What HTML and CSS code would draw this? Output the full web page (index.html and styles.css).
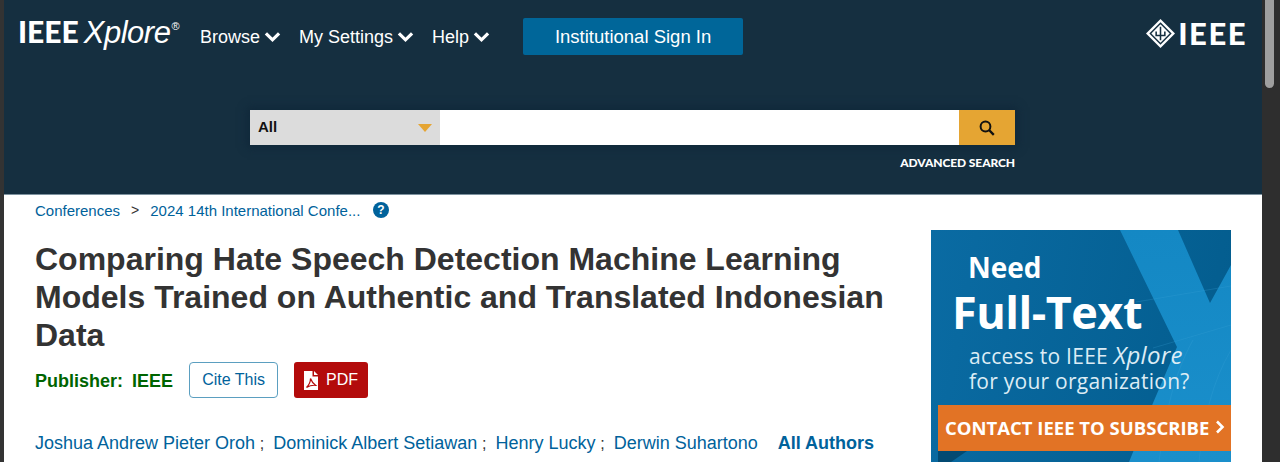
FILE: index.html
```html
<!DOCTYPE html>
<html lang="en">
<head>
    <meta charset="UTF-8">
    <title>Comparing Hate Speech Detection Machine Learning Models</title>
    <link rel="stylesheet" href="styles.css">
</head>
<body>
    <div class="window">
        <div class="page">
            <header class="site-header">
                <div class="top-row">
                    <a class="logo"><span class="logo-ieee">IEEE</span><span class="logo-xplore">Xplore</span><sup class="logo-reg">®</sup></a>
                    <nav class="main-nav">
                        <a class="nav-item">Browse <svg class="chevron" viewBox="0 0 16 11"><path d="M1.800 2 8 8.200 14.200 2" fill="none" stroke="#fff" stroke-width="3"/></svg></a>
                        <a class="nav-item">My Settings <svg class="chevron" viewBox="0 0 16 11"><path d="M1.800 2 8 8.200 14.200 2" fill="none" stroke="#fff" stroke-width="3"/></svg></a>
                        <a class="nav-item">Help <svg class="chevron" viewBox="0 0 16 11"><path d="M1.800 2 8 8.200 14.200 2" fill="none" stroke="#fff" stroke-width="3"/></svg></a>
                    </nav>
                    <a class="signin-btn">Institutional Sign In</a>
                    <a class="ieee-logo">
                        <svg class="ieee-mark" viewBox="0 0 30 30">
                            <path d="M15 0 30 15 15 30 0 15Z" fill="#fff"/>
                            <path d="M15 4.500 25.500 15 15 25.500 4.500 15Z" fill="none" stroke="#152f40" stroke-width="1.500"/>
                            <path d="M15 8v14M10.500 13v4h9v-4" stroke="#152f40" stroke-width="1.600" fill="none"/>
                        </svg>
                        <span class="ieee-word">IEEE</span>
                    </a>
                </div>
                <div class="search-wrap">
                    <div class="search-bar">
                        <div class="search-select"><span class="select-label">All</span><span class="select-arrow"></span></div>
                        <div class="search-input"></div>
                        <button class="search-btn">
                            <svg viewBox="0 0 16 16" width="16" height="16"><circle cx="6.500" cy="6.500" r="4.900" fill="none" stroke="#111" stroke-width="2"/><path d="M10 10l4.800 4.800" stroke="#111" stroke-width="2.400"/></svg>
                        </button>
                    </div>
                    <a class="advanced-link">ADVANCED SEARCH</a>
                </div>
            </header>

            <main class="content">
                <div class="article">
                    <div class="breadcrumbs">
                        <a>Conferences</a>
                        <span class="crumb-sep">&gt;</span>
                        <a>2024 14th International Confe...</a>
                        <svg class="help-icon" viewBox="0 0 16 16"><circle cx="8" cy="8" r="8" fill="#00629b"/><text x="8" y="12.300" text-anchor="middle" class="help-mark">?</text></svg>
                    </div>
                    <h1 class="doc-title">Comparing Hate Speech Detection Machine Learning Models Trained on Authentic and Translated Indonesian Data</h1>
                    <div class="doc-meta">
                        <span class="publisher">Publisher:&nbsp; IEEE</span>
                        <a class="cite-btn">Cite This</a>
                        <a class="pdf-btn">
                            <svg class="pdf-icon" viewBox="0 0 14 19"><path d="M0 0h8.500v5.500H14V19H0Z" fill="#fff"/><path d="M10 0l4 4h-4Z" fill="#fff"/><path d="M6.500 7.500c0 3-1.500 6.500-4 9 2.500-1.500 6-2.500 9-2.200-2.200-1.800-4-4-5-6.800Z" fill="none" stroke="#b30b0b" stroke-width="1.200"/></svg>
                            PDF
                        </a>
                    </div>
                    <div class="authors">
                        <a>Joshua Andrew Pieter Oroh</a><span class="sep">;</span>
                        <a>Dominick Albert Setiawan</a><span class="sep">;</span>
                        <a>Henry Lucky</a><span class="sep">;</span>
                        <a>Derwin Suhartono</a>
                        <a class="all-authors">All Authors</a>
                    </div>
                </div>
                <aside class="ad">
                    <svg class="ad-bg" viewBox="0 0 300 232" preserveAspectRatio="none">
                        <defs>
                            <linearGradient id="xband" x1="0" y1="0" x2="0" y2="1">
                                <stop offset="0" stop-color="#1488c4"/>
                                <stop offset="1" stop-color="#1a8fcb"/>
                            </linearGradient>
                        </defs>
                        <path d="M189 0H247L279 73 300 35V232H198L222 173 246 117Z" fill="url(#xband)"/>
                        <path d="M205 72 300 56M228 232C234 190 240 150 262 110M268 232C272 190 282 150 300 120M222 118 300 95" fill="none" stroke="#3da2d6" stroke-opacity=".25"/>
                        <path d="M7 221H36L20 232H7Z" fill="#034a72"/>
                    </svg>
                    <div class="ad-text">
                        <div class="ad-need">Need</div>
                        <div class="ad-full">Full-Text</div>
                        <div class="ad-line">access to IEEE <em class="ad-xplore">Xplore</em><br>for your organization?</div>
                    </div>
                    <div class="ad-cta">CONTACT IEEE TO SUBSCRIBE <svg class="cta-arrow" viewBox="0 0 10 14"><path d="M2 1.500 7.500 7 2 12.500" fill="none" stroke="#fff" stroke-width="2.600"/></svg></div>
                </aside>
            </main>
        </div>
        <div class="scrollbar"><div class="scroll-thumb"></div></div>
    </div>
</body>
</html>
```

FILE: styles.css
```css
:root {
    --header-bg: #152f40;
    --link-color: #00629b;
    --text-color: #333333;
    --gold: #e5a533;
    --edge: #333333;
}

html, body {
    margin: 0;
    height: 100%;
    overflow: hidden;
}

body {
    font-family: "Liberation Sans", Arial, sans-serif;
    color: var(--text-color);
    background: #fff;
}

a {
    color: var(--link-color);
    text-decoration: none;
}

.window {
    display: flex;
    height: 462px;
    overflow: hidden;
    border-left: 4px solid var(--edge);
}

.page {
    flex: 1;
    min-width: 0;
    background: #fff;
}

.scrollbar {
    width: 18px;
    background: #2e2e2e;
    box-sizing: border-box;
    padding-left: 3px;
}

.scroll-thumb {
    width: 9px;
    height: 88px;
    border-radius: 0 0 5px 5px;
    background: #9f9f9f;
}

/* header */
.site-header {
    height: 195px;
    background: var(--header-bg);
    border-bottom: 1px solid #7d929f;
    box-sizing: border-box;
}

.top-row {
    display: flex;
    align-items: flex-start;
    height: 110px;
    color: #fff;
}

.logo {
    display: flex;
    align-items: baseline;
    color: #fff;
    margin: 14px 0 0 14px;
    width: 167px;
    white-space: nowrap;
}

.logo-ieee {
    font-family: Lato, sans-serif;
    font-size: 30px;
    font-weight: 900;
    line-height: 34px;
}

.logo-xplore {
    font-size: 31px;
    font-style: italic;
    line-height: 34px;
    margin-left: 5px;
    letter-spacing: -0.5px;
}

.logo-reg {
    font-size: 11px;
    align-self: flex-start;
    line-height: 14px;
    margin: 5px 0 0 1px;
}

.main-nav {
    display: flex;
    gap: 18px;
    margin: 26px 0 0 15px;
}

.nav-item {
    display: flex;
    align-items: center;
    gap: 4px;
    color: #fff;
    font-size: 18px;
    line-height: 22px;
}

.chevron {
    width: 17px;
    height: 12px;
}

.signin-btn {
    width: 220px;
    height: 37px;
    line-height: 37px;
    margin: 18px 0 0 33px;
    border-radius: 2px;
    background: #006699;
    color: #fff;
    font-size: 18.500px;
    text-align: center;
}

.ieee-logo {
    display: flex;
    align-items: center;
    gap: 3px;
    margin: 18px 0 0 auto;
    padding-right: 15px;
    color: #fff;
}

.ieee-mark {
    width: 29px;
    height: 29px;
}

.ieee-word {
    font-family: Lato, sans-serif;
    font-size: 31px;
    line-height: 30px;
    font-weight: 900;
    letter-spacing: 1.500px;
}

.search-wrap {
    width: 765px;
    margin-left: 246px;
}

.search-bar {
    display: flex;
    height: 35px;
    box-shadow: 0 0 8px 3px #10283a;
}

.search-select {
    width: 190px;
    box-sizing: border-box;
    padding: 0 8px;
    display: flex;
    align-items: center;
    justify-content: space-between;
    background: #dcdcdc;
    color: #111;
    font-size: 15px;
    font-weight: bold;
}

.select-label {
    margin-bottom: 2px;
}

.select-arrow {
    width: 0;
    height: 0;
    border-left: 7px solid transparent;
    border-right: 7px solid transparent;
    border-top: 8px solid var(--gold);
}

.search-input {
    flex: 1;
    background: #fff;
}

.search-btn {
    width: 56px;
    padding: 0;
    border: 0;
    background: var(--gold);
    display: flex;
    align-items: center;
    justify-content: center;
}

.advanced-link {
    display: block;
    margin-top: 11px;
    color: #fff;
    font-family: Lato, sans-serif;
    font-size: 12px;
    font-weight: 900;
    line-height: 14px;
    text-align: right;
    letter-spacing: -0.1px;
}

/* content */
.content {
    display: flex;
    align-items: flex-start;
    padding: 0 31px 0 31px;
}

.article {
    flex: 1;
    min-width: 0;
}

.breadcrumbs {
    display: flex;
    align-items: center;
    height: 30px;
    font-size: 15px;
}

.crumb-sep {
    margin: 0 11px;
    color: #333;
    font-size: 14px;
}

.help-icon {
    width: 16px;
    height: 16px;
    margin-left: 13px;
}

.help-mark {
    fill: #fff;
    font-size: 12px;
    font-weight: bold;
}

.doc-title {
    width: 870px;
    margin: 15px 0 0;
    font-size: 32px;
    line-height: 38px;
    font-weight: bold;
    color: var(--text-color);
}

.doc-meta {
    display: flex;
    align-items: center;
    margin-top: 8px;
    height: 36px;
}

.publisher {
    color: #006400;
    font-size: 18px;
    font-weight: bold;
    margin: 2px 16px 0 0;
    word-spacing: -0.5px;
}

.cite-btn {
    width: 89px;
    height: 36px;
    line-height: 33px;
    box-sizing: border-box;
    border: 1px solid #5b9fc0;
    border-radius: 4px;
    text-align: center;
    font-size: 16px;
    margin-right: 16px;
}

.pdf-btn {
    display: flex;
    align-items: center;
    justify-content: center;
    gap: 8px;
    width: 74px;
    height: 36px;
    border-radius: 3px;
    background: #b30b0b;
    color: #fff;
    font-size: 16px;
}

.pdf-icon {
    width: 14px;
    height: 19px;
}

.authors {
    display: flex;
    align-items: baseline;
    margin-top: 34px;
    font-size: 18px;
    line-height: 22px;
    white-space: nowrap;
}

.sep {
    margin: 0 9px 0 4.700px;
    font-size: 16px;
}

.all-authors {
    font-weight: bold;
    margin-left: 20px;
}

/* banner on the right */
.ad {
    position: relative;
    flex: none;
    width: 300px;
    height: 232px;
    margin-top: 35px;
    overflow: hidden;
    background: linear-gradient(100deg, #0a6ba3, #035c8d);
    color: #fff;
    font-family: "Open Sans", sans-serif;
}

.ad-bg {
    position: absolute;
    left: 0;
    top: 0;
    width: 100%;
    height: 100%;
}

.ad-text {
    position: relative;
    padding: 19px 0 0 21px;
}

.ad-need {
    margin-left: 16px;
    font-size: 28px;
    line-height: 36px;
    font-weight: bold;
}

.ad-full {
    font-size: 45px;
    line-height: 50px;
    font-weight: bold;
    margin-top: 2px;
    letter-spacing: -0.5px;
}

.ad-line {
    margin: 5px 0 0 17px;
    font-size: 21px;
    line-height: 25px;
    letter-spacing: 0.25px;
    color: #dcecf5;
    white-space: nowrap;
}

.ad-xplore {
    font-size: 24px;
}

.ad-cta {
    position: absolute;
    left: 7px;
    right: 0;
    top: 175px;
    height: 46px;
    display: flex;
    align-items: center;
    gap: 6px;
    box-sizing: border-box;
    padding: 0 0 2px 7px;
    background: #e27325;
    font-size: 18.500px;
    font-weight: bold;
    white-space: nowrap;
}

.cta-arrow {
    width: 10px;
    height: 14px;
}
```
